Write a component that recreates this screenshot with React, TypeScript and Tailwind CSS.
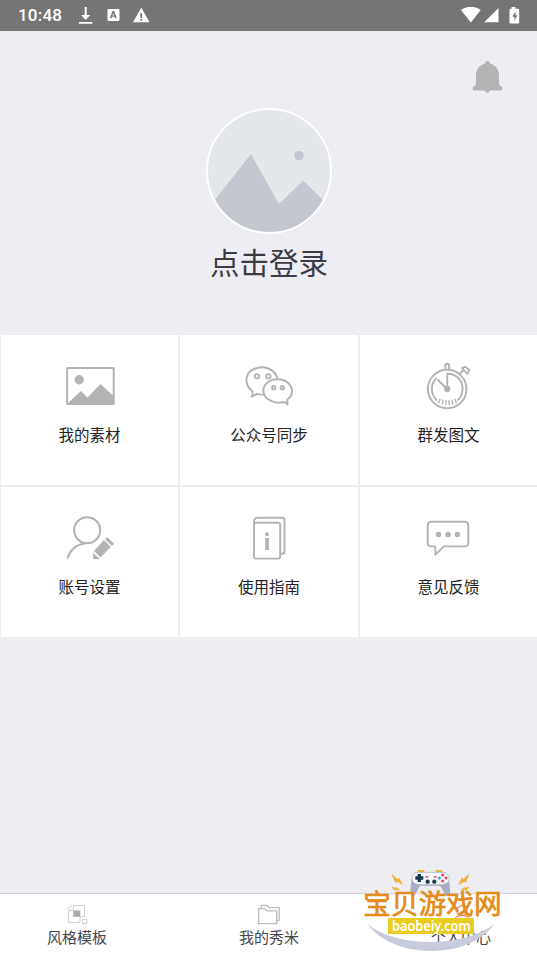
import type { ReactNode } from "react";

const Line = ({ children }: { children: ReactNode }) => (
  <svg
    width="50"
    height="50"
    viewBox="0 0 50 50"
    fill="none"
    stroke="#b3b3b3"
    strokeWidth="1.9"
    strokeLinecap="round"
    strokeLinejoin="round"
  >
    {children}
  </svg>
);

const PictureIcon = () => (
  <Line>
    <rect x="2.1" y="6" width="46.6" height="36" rx="0.6" strokeWidth="2" />
    <circle cx="14.2" cy="17.8" r="4.7" fill="#b3b3b3" stroke="none" />
    <path d="M2.5 41.5 16 29l6.5 6.5L35.5 22 48.5 34v8z" fill="#b3b3b3" stroke="none" />
  </Line>
);

const ChatBubblesIcon = () => (
  <Line>
    <path d="M19.500 32.500c-2.500.4-4.500.1-6.500-.6l-5 2.800.8-5C-.5 22.500.8 10.800 10 7c9.500-4 20.500-.5 23.500 9.500" />
    <path d="M40.500 40c-8.500 2.500-20.300-1.700-21.100-10.500-.6-7.300 6.500-12.500 14.300-12.300 8 .2 14.300 5 14.300 12 0 3.500-1.700 6.300-4.700 8.300l.2 5z" />
    <circle cx="13" cy="14.300" r="2.200" />
    <circle cx="24.300" cy="14.300" r="2.200" />
    <circle cx="29.700" cy="25.700" r="1.700" />
    <circle cx="38.300" cy="25.700" r="1.700" />
  </Line>
);

const StopwatchIcon = () => (
  <Line>
    <circle cx="23.200" cy="27" r="19.300" />
    <path d="M21.300 7.500V3.600a1.900 1.900 0 0 1 3.800 0v3.900M23.200 25V11.800c10 0 16 7.700 15.300 16.200-.3 4-1.800 7.400-4.500 9.800M12 16.500C6.300 22.500 6.500 32 12.500 37.800M14 18l7.500 7.500" />
    <circle cx="23.200" cy="27" r="2.200" fill="#b3b3b3" />
    <path d="m16 37.300-1.300 3.500M19 38.300l-.7 3.800M22 38.800l-.2 4M25 38.800l.3 4M28 38.300l.7 3.800M31 37.300l1.300 3.500" strokeWidth="1.400" />
    <path d="m36.500 11 2.600-2.700M38 6.200l5.300 5.600 2-3.800-4-3.300z" />
  </Line>
);

const AccountIcon = () => (
  <Line>
    <circle cx="22.200" cy="16.300" r="13" strokeWidth="2.100" />
    <path d="M2.400 44.500C5 36 11.500 30 20 29.500" strokeWidth="2.100" strokeLinecap="butt" />
    <path
      d="m39 26.300 6.700 6.700-10.200 10.300-6.300-6.300zM28.300 39v6h6zM42.300 23.300l6.700 6.400-2 2-6.700-6.400z"
      fill="#b3b3b3"
      stroke="#b3b3b3"
      strokeWidth=".3"
    />
  </Line>
);

const GuideIcon = () => (
  <Line>
    <rect x="10" y="8.800" width="26.200" height="35.800" rx="2" />
    <path d="M10 11V7.200a3.500 3.500 0 0 1 3.500-3.500h24.700a2.300 2.300 0 0 1 2.300 2.300v31.500a2.300 2.300 0 0 1-2.300 2.300h-1.500" />
    <circle cx="23" cy="20.300" r="2" fill="#b3b3b3" stroke="none" />
    <path d="M21.200 24h3.800v12h-3.800z" fill="#b3b3b3" stroke="none" />
  </Line>
);

const FeedbackIcon = () => (
  <Line>
    <path d="M7 7.800h34a3.300 3.300 0 0 1 3.300 3.300v18a3.300 3.300 0 0 1-3.300 3.300H20l-8.700 8.300v-8.300H7a3.300 3.300 0 0 1-3.300-3.300v-18A3.300 3.300 0 0 1 7 7.800z" />
    <g fill="#b3b3b3" stroke="none">
      <circle cx="14.500" cy="20.500" r="2.700" />
      <circle cx="24" cy="20.500" r="2.700" />
      <circle cx="33.400" cy="20.500" r="2.700" />
    </g>
  </Line>
);

const menu = [
  { label: "我的素材", icon: <PictureIcon /> },
  { label: "公众号同步", icon: <ChatBubblesIcon /> },
  { label: "群发图文", icon: <StopwatchIcon /> },
  { label: "账号设置", icon: <AccountIcon /> },
  { label: "使用指南", icon: <GuideIcon /> },
  { label: "意见反馈", icon: <FeedbackIcon /> },
];

const tabs = [
  {
    label: "风格模板",
    icon: (
      <svg width="24" height="22" viewBox="0 0 24 22" fill="none" stroke="#cfcfcf">
        <path d="M8.500 1.500h11v11h-11zM3.500 6.500h11.500v12H3.500zM17.500 15.500h4.500v4h-4.500zM2 6l5-5" />
        <path d="M8.500 7H15v5.500H8.500z" fill="#aaa" stroke="none" />
      </svg>
    ),
  },
  {
    label: "我的秀米",
    icon: (
      <svg width="24" height="22" viewBox="0 0 24 22" fill="none" stroke="#bdbdbd" strokeWidth="1.300" strokeLinejoin="round">
        <path d="M1.700 4.600h6l2 2.200h10v12.900h-18z" />
        <path d="M4 4.300V1.500h6.200l2 2.200h10v12.800h-2.300" />
      </svg>
    ),
  },
  {
    label: "个人中心",
    icon: (
      <svg width="24" height="22" viewBox="0 0 24 22" fill="none" stroke="#ef7b6c" strokeWidth="1.200">
        <circle cx="13" cy="6.500" r="5" />
        <path d="M4 19c1-5 4.500-7.500 9-7.500s8 2.500 9 7.500" />
      </svg>
    ),
  },
];

const StatusBar = () => (
  <header className="flex h-[31px] shrink-0 items-center justify-between bg-[#757575] pl-[18px] pr-[17px] text-white">
    <div className="flex items-center">
      <span className="w-[45px] font-['Roboto',sans-serif] text-[17px] font-medium tracking-[0.2px]">10:48</span>
      <svg className="ml-[15px]" width="74" height="18" viewBox="0 0 74 18" fill="currentColor">
        <path d="M6.700 0h2v8h3.600l-4.600 5-4.600-5h3.600zM1 15h13.400v1.700H1z" />
        <path
          fillRule="evenodd"
          d="M30.800 2h9.400q1.300 0 1.300 1.300v9.400q0 1.300-1.300 1.300h-9.400q-1.300 0-1.300-1.300V3.300q0-1.300 1.300-1.300zM34.500 4l-2.700 7.300h1.700l.5-1.500h2.600l.5 1.500h1.700L36.100 4zm.8 2 .8 2.400h-1.600z"
        />
        <path fillRule="evenodd" d="M63.300.800 71.600 15.200H55zM62.400 6v5h1.700V6zm0 6v1.700h1.700V12z" />
      </svg>
    </div>
    <svg width="59" height="18" viewBox="0 0 59 18" fill="currentColor">
      <path d="M0 3c6-4.300 13.800-4.300 19.700 0L9.900 15.500zM37.500 1v14.300H23.200z" />
      <path
        fillRule="evenodd"
        d="M50.500 0h3.800v1.700h2.900q1 0 1 1v12.700q0 1-1 1h-7.700q-1 0-1-1V2.700q0-1 1-1h1zM54.400 4.200l-3 5.500h2v4l3-5.500h-2z"
      />
    </svg>
  </header>
);

const Avatar = () => (
  <svg width="126" height="126" viewBox="0 0 126 126">
    <defs>
      <clipPath id="avatar">
        <circle cx="63" cy="63" r="61.500" />
      </clipPath>
    </defs>
    <g clipPath="url(#avatar)">
      <path d="M0 0h126v126H0z" fill="#e4e8eb" />
      <path d="M6 95.500 45 46 73 96 97.200 72.500 126 101v25H0z" fill="#c3c7cf" />
      <circle cx="92.900" cy="47.700" r="4.800" fill="#c3c7cf" />
    </g>
    <circle cx="63" cy="63" r="62" fill="none" stroke="#fff" strokeWidth="2" />
  </svg>
);

const SiteBadge = () => (
  <svg className="absolute bottom-0 right-0" width="187" height="100" viewBox="0 0 561 300">
    {/* smile under the name */}
    <path d="M53 205c85 70 285 72 379 0-75 107-300 107-379 0z" fill="#c8cbdc" />
    {/* controller */}
    <circle cx="240" cy="78" r="52" fill="#e9eeeb" opacity=".7" />
    <path d="M203 48v-6h20v6M257 48v-6h20v6" fill="#f1b52e" />
    <path
      d="M205 48h71c18 0 21 14 22 30 2 18 6 40-4 43-12 2-16-32-27-32h-53c-11 0-15 34-27 31-9-3-5-26-3-44 2-17 4-28 21-28z"
      fill="#a9aec2"
    />
    <path d="M207 49h68c15 0 23 8 23 20 0 12-14 17-28 17h-58c-15 0-26-6-26-19 0-12 7-18 21-18z" fill="#f5f7fa" stroke="#a9aec2" strokeWidth="2" />
    <path d="M203 54h10v7h7v10h-7v7h-10v-7h-7V61h7z" fill="#173d53" />
    <circle cx="233" cy="77" r="6.500" fill="#223d50" />
    <circle cx="253" cy="77" r="6.500" fill="#223d50" />
    <path d="M226 63h9M251 63h9" stroke="#df4f57" strokeWidth="4" />
    <circle cx="278" cy="57" r="4.500" fill="#e6485a" />
    <circle cx="278" cy="75" r="4.500" fill="#e6485a" />
    <circle cx="268" cy="66" r="4.500" fill="#3aa5cc" />
    <circle cx="288" cy="66" r="4.500" fill="#e6485a" />
    {/* sparks */}
    <path
      d="m126 56 18 16 2-6 11 19-17-10-2 5zM126 94l12 3v-3l10 8-12-2-1 3zM356 56l-18 16-2-6-9 19 17-10 2 5zM357 94l-12 3v-3l-11 8 12-2 1 3z"
      fill="#f4b72b"
      stroke="#f2a51e"
      strokeWidth="2"
    />
    <text
      x="40"
      y="175"
      textLength="415"
      fontSize="83"
      fill="#e48b18"
      stroke="#e48b18"
      strokeWidth="2"
      fontFamily="'Noto Sans CJK SC', sans-serif"
    >
      宝贝游戏网
    </text>
    <path d="M114 186h258v48H114z" fill="#ebcc22" />
    <text
      x="126"
      y="225"
      textLength="236"
      lengthAdjust="spacingAndGlyphs"
      fontSize="43"
      fontWeight="600"
      fill="#fff"
      fontFamily="'Noto Sans', sans-serif"
    >
      baobeiy.com
    </text>
  </svg>
);

export default function App() {
  return (
    <div className="relative flex h-screen min-h-[956px] flex-col overflow-hidden bg-[#eeedf4] font-['Noto_Sans_CJK_SC',sans-serif]">
      <StatusBar />

      {/* Profile */}
      <section className="flex h-[303px] shrink-0 flex-col items-center">
        <div className="flex h-[77px] w-full justify-end pr-[34px] pt-[29px]">
          <svg width="31" height="34" viewBox="0 0 31 34" fill="#b3b3b3">
            <path d="M15.500 1c1.600 0 2.400 1 2.500 2.600 5.600 1.500 9 6 9 12 0 4.700-.3 8.600 1.200 10.400 3 .5 3 4.600 0 4.600H18c-.5 3-4.500 3-5 0H2.800c-3 0-3-4.100 0-4.600C4.300 24.200 4 20.300 4 15.600c0-6 3.400-10.500 9-12C13.100 2 13.900 1 15.500 1z" />
          </svg>
        </div>
        <Avatar />
        <h1 className="mt-[5px] pl-px text-[29.5px] leading-[44px] text-[#3c3b42]">点击登录</h1>
      </section>

      {/* Menu grid */}
      <main className="grid h-[304px] shrink-0 grid-cols-[177px_178px_1fr] grid-rows-[150px_150px] gap-[2px] bg-[#eeeeee] pl-px pt-px">
        {menu.map((item) => (
          <button key={item.label} className="flex flex-col items-center bg-white pt-[27px]">
            {item.icon}
            <span className="mt-[10px] text-[15.5px] leading-6 text-[#222]">{item.label}</span>
          </button>
        ))}
      </main>

      {/* Bottom tabs */}
      <nav className="mt-auto flex h-[63px] shrink-0 justify-between border-t border-[#d3d3d7] bg-white pl-[47px] pr-[46px] pt-[10px]">
        {tabs.map((tab) => (
          <button key={tab.label} className="flex flex-col items-center">
            {tab.icon}
            <span className="text-[15px] leading-[22px] text-[#45454b]">{tab.label}</span>
          </button>
        ))}
      </nav>

      <SiteBadge />
    </div>
  );
}
